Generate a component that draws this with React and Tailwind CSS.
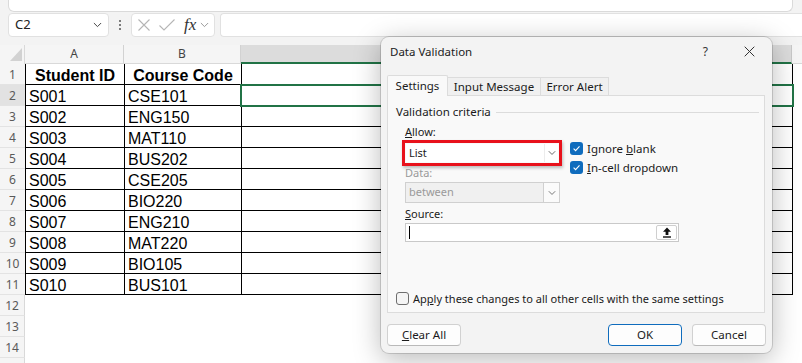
import React from "react";

const data = [
  ["S001", "CSE101"],
  ["S002", "ENG150"],
  ["S003", "MAT110"],
  ["S004", "BUS202"],
  ["S005", "CSE205"],
  ["S006", "BIO220"],
  ["S007", "ENG210"],
  ["S008", "MAT220"],
  ["S009", "BIO105"],
  ["S010", "BUS101"],
];

function Chevron({ color = "#333", w = 10 }) {
  return (
    <svg width={w} height="6" viewBox="0 0 10 6">
      <path d="M1 0.8l4 4 4-4" stroke={color} strokeWidth="1.1" fill="none" />
    </svg>
  );
}

function CheckedBox() {
  return (
    <div className="w-[13px] h-[13px] rounded-[3px] bg-[#0f6cbd] flex items-center justify-center shrink-0">
      <svg width="9" height="9" viewBox="0 0 9 9">
        <path d="M1.6 4.7l2 2 3.9-4.3" stroke="white" strokeWidth="1.1" fill="none" />
      </svg>
    </div>
  );
}

function Row({ n }) {
  const isData = n <= 11;
  const isHead = n === 1;
  const vals = isHead ? ["Student ID", "Course Code"] : isData ? data[n - 2] : null;
  return (
    <div className="flex h-[21px]">
      <div
        className={`w-[25px] shrink-0 border-b border-[#e3e3e3] text-center text-[12px] leading-[21px] text-[#5a5a5a] font-['Segoe_UI','Noto_Sans',sans-serif] ${
          n === 2 ? "bg-[#e2e2e2]" : "bg-[#f5f5f5]"
        } ${isData ? "" : "border-r border-r-[#d9d9d9]"}`}
      >
        {n}
      </div>
      {isData ? (
        <>
          <div
            className={`w-[100px] shrink-0 border-l border-r border-b border-black text-[16px] leading-[21px] pt-[1px] text-black ${
              isHead ? "font-bold text-center" : "pl-[3px]"
            }`}
          >
            {vals[0]}
          </div>
          <div
            className={`w-[117px] shrink-0 border-r border-b border-black text-[16px] leading-[21px] pt-[1px] text-black ${
              isHead ? "font-bold text-center" : "pl-[3px]"
            }`}
          >
            {vals[1]}
          </div>
          <div className="w-[551px] shrink-0 border-r border-b border-black" />
          <div className="flex-1" />
        </>
      ) : (
        <div className="flex-1" />
      )}
    </div>
  );
}

export default function App() {
  const ui = "font-['Segoe_UI','Noto_Sans',sans-serif]";
  return (
    <div className="relative w-[802px] h-[363px] overflow-hidden bg-white font-['Liberation_Sans',Arial,sans-serif]">
      {/* ribbon bottom */}
      <div className="h-[12px] bg-[#f3f3f3] pl-[8px] pr-[9px]">
        <div className="h-full bg-white border border-t-0 border-[#dadada] rounded-b-[6px]" />
      </div>
      {/* formula toolbar */}
      <div className={`h-[33px] bg-[#f3f3f3] flex items-start pt-[1px] pl-[8px] ${ui}`}>
        <div className="w-[101px] h-[24px] bg-white border border-[#e1e1e1] rounded-[4px] flex items-center justify-between pl-[6px] pr-[6px]">
          <span className="text-[13px] text-[#222]">C2</span>
          <Chevron color="#444" w={9} />
        </div>
        <div className="w-[22px] h-[24px] flex flex-col items-center justify-center gap-[2px]">
          <div className="w-[2px] h-[2px] bg-[#555] rounded-full" />
          <div className="w-[2px] h-[2px] bg-[#555] rounded-full" />
          <div className="w-[2px] h-[2px] bg-[#555] rounded-full" />
        </div>
        <div className="w-[84px] h-[24px] bg-white border border-[#e1e1e1] rounded-[4px] flex items-center pl-[5px]">
          <svg width="14" height="14" viewBox="0 0 14 14">
            <path d="M1.5 1.5l11 11M12.5 1.5l-11 11" stroke="#b5b5b5" strokeWidth="1.1" />
          </svg>
          <svg width="18" height="14" viewBox="0 0 18 14" className="ml-[7px]">
            <path d="M1.5 7.5l4.5 4.5 10.5-10.5" stroke="#b5b5b5" strokeWidth="1.1" fill="none" />
          </svg>
          <span className="ml-[8px] text-[17px] italic text-[#333] font-['Liberation_Serif',serif] leading-none mt-[-2px]">
            fx
          </span>
          <span className="ml-[4px]">
            <Chevron color="#999" w={9} />
          </span>
        </div>
        <div className="ml-[5px] flex-1 h-[24px] bg-white border border-r-0 border-[#e1e1e1] rounded-l-[4px]" />
      </div>
      {/* column headers */}
      <div className={`flex h-[19px] bg-[#f5f5f5] text-[12px] text-[#444] ${ui}`}>
        <div className="w-[25px] shrink-0 relative border-r border-[#d9d9d9]">
          <svg width="25" height="19" viewBox="0 0 25 19" className="absolute inset-0">
            <path d="M22 3v13H10z" fill="#d2d2d2" />
          </svg>
        </div>
        <div className="w-[99px] shrink-0 border-r border-[#d2d2d2] border-b border-b-[#d9d9d9] text-center leading-[18px]">A</div>
        <div className="w-[117px] shrink-0 border-r border-[#d2d2d2] border-b border-b-[#d9d9d9] text-center leading-[18px]">B</div>
        <div className="w-[551px] shrink-0 bg-[#dcdcdc] border-b-2 border-[#217346] border-r border-r-[#c8c8c8] text-center leading-[17px]">
          C
        </div>
        <div className="flex-1 border-b border-[#d9d9d9]" />
      </div>
      {/* rows */}
      {Array.from({ length: 15 }, (_, i) => (
        <Row key={i} n={i + 1} />
      ))}
      {/* selected cell */}
      <div className="absolute left-[240px] top-[84px] w-[554px] h-[23px] border-2 border-[#217346]" />

      {/* Data Validation dialog */}
      <div
        className={`absolute left-[381px] top-[37px] w-[391px] h-[316px] bg-[#f3f3f3] rounded-[8px] flex flex-col shadow-[0_0_0_1px_rgba(0,0,0,0.14),0_6px_28px_rgba(0,0,0,0.28)] text-[11px] text-[#1b1b1b] ${ui}`}
      >
        <div className="h-[29px] flex items-center pl-[9px] pr-[17px] shrink-0">
          <span className="text-[11.5px] text-[#1b1b1b]">Data Validation</span>
          <span className="ml-auto text-[12px] text-[#333] mr-[36px]">?</span>
          <svg width="11" height="11" viewBox="0 0 11 11">
            <path d="M0.7 0.7l9.6 9.6M10.3 0.7l-9.6 9.6" stroke="#333" strokeWidth="1" />
          </svg>
        </div>
        {/* tabs */}
        <div className="mt-[9px] ml-[6px] h-[20px] flex items-end shrink-0">
          <div className="relative z-10 w-[61px] h-[21px] mb-[-1px] bg-[#f9f9f9] border border-b-0 border-[#dcdcdc] rounded-t-[2px] flex items-center justify-center text-[11.5px]">
            Settings
          </div>
          <div className="w-[93px] h-[18px] bg-[#f0f0f0] border border-b-0 border-l-0 border-[#dcdcdc] flex items-center justify-center text-[11.5px]">
            Input Message
          </div>
          <div className="w-[68px] h-[18px] bg-[#f0f0f0] border border-b-0 border-l-0 border-[#dcdcdc] flex items-center justify-center text-[11.5px]">
            Error Alert
          </div>
        </div>
        {/* panel */}
        <div className="mx-[6px] w-[378px] h-[218px] bg-[#f9f9f9] border border-[#dcdcdc] flex flex-col shrink-0">
          <div className="mt-[8px] h-[16px] pl-[8px] pr-[5px] flex items-center gap-[5px]">
            <span className="leading-[16px] text-[11.5px]">Validation criteria</span>
            <div className="flex-1 h-px bg-[#dcdcdc]" />
          </div>
          <div className="pl-[14px]">
            <div className="mt-[4px] h-[16px] leading-[16px] pl-[3px]">
              <u>A</u>llow:
            </div>
            <div className="flex items-start h-[26px]">
              <div className="w-[160px] h-[26px] border-[3px] border-[#e8111b] p-[1px] shadow-[1px_2px_3px_rgba(0,0,0,0.25)]">
                <div className="h-full bg-white flex items-center pl-[3px]">
                  <span>List</span>
                  <div className="ml-auto w-[14px] h-full border-l border-[#ececec] flex items-center justify-center">
                    <Chevron color="#555" w={8} />
                  </div>
                </div>
              </div>
              <div className="ml-[8px] pt-[2px] flex flex-col gap-[6px]">
                <div className="flex items-center gap-[4px] h-[13px]">
                  <CheckedBox />
                  <span className="leading-[13px] text-[11.5px]">
                    Ignore <u>b</u>lank
                  </span>
                </div>
                <div className="flex items-center gap-[4px] h-[13px]">
                  <CheckedBox />
                  <span className="leading-[13px] text-[11.5px]">
                    <u>I</u>n-cell dropdown
                  </span>
                </div>
              </div>
            </div>
            <div className="mt-[-1px] h-[16px] leading-[16px] pl-[3px] text-[#9a9a9a]">Data:</div>
            <div className="mt-[1px] ml-[3px] w-[155px] h-[21px] bg-[#f0f0f0] border border-[#d0d0d0] flex items-center">
              <span className="pl-[3px] text-[#9a9a9a]">between</span>
              <div className="ml-auto w-[16px] h-full bg-[#fbfbfb] border-l border-[#d0d0d0] flex items-center justify-center">
                <Chevron color="#666" w={8} />
              </div>
            </div>
            <div className="mt-[3px] h-[16px] leading-[16px] pl-[3px]">
              <u>S</u>ource:
            </div>
            <div className="mt-[1px] ml-[3px] w-[274px] h-[19px] bg-white border border-[#c9c9c9] flex items-center">
              <div className="ml-[3px] w-px h-[13px] bg-black" />
              <div className="ml-auto mr-[1px] w-[21px] h-[15px] bg-white border border-[#cfcfcf] rounded-[2px] flex items-center justify-center">
                <svg width="10" height="11" viewBox="0 0 10 11">
                  <path d="M5 0.5L1 4.8h2.6V8h2.8V4.8H9z" fill="#111" />
                  <rect x="1" y="9.3" width="8" height="1.4" fill="#111" />
                </svg>
              </div>
            </div>
          </div>
          <div className="mt-auto mb-[7px] pl-[8px] flex items-center gap-[4px]">
            <div className="w-[13px] h-[13px] rounded-[3px] border border-[#6e6e6e] bg-[#f5f5f5]" />
            <span className="leading-[13px]">
              Ap<u>p</u>ly these changes to all other cells with the same settings
            </span>
          </div>
        </div>
        {/* buttons */}
        <div className="mt-[11px] px-[6px] flex items-center shrink-0">
          <div className="w-[74px] h-[22px] bg-[#fdfdfd] border border-[#d1d1d1] border-b-[#b9b9b9] rounded-[4px] flex items-center justify-center text-[11.5px]">
            <span>
              <u>C</u>lear All
            </span>
          </div>
          <div className="ml-auto w-[74px] h-[22px] bg-[#fdfdfd] border border-[#0f6cbd] rounded-[4px] flex items-center justify-center text-[11.5px]">
            OK
          </div>
          <div className="ml-[10px] w-[74px] h-[22px] bg-[#fdfdfd] border border-[#d1d1d1] border-b-[#b9b9b9] rounded-[4px] flex items-center justify-center text-[11.5px]">
            Cancel
          </div>
        </div>
      </div>
    </div>
  );
}
